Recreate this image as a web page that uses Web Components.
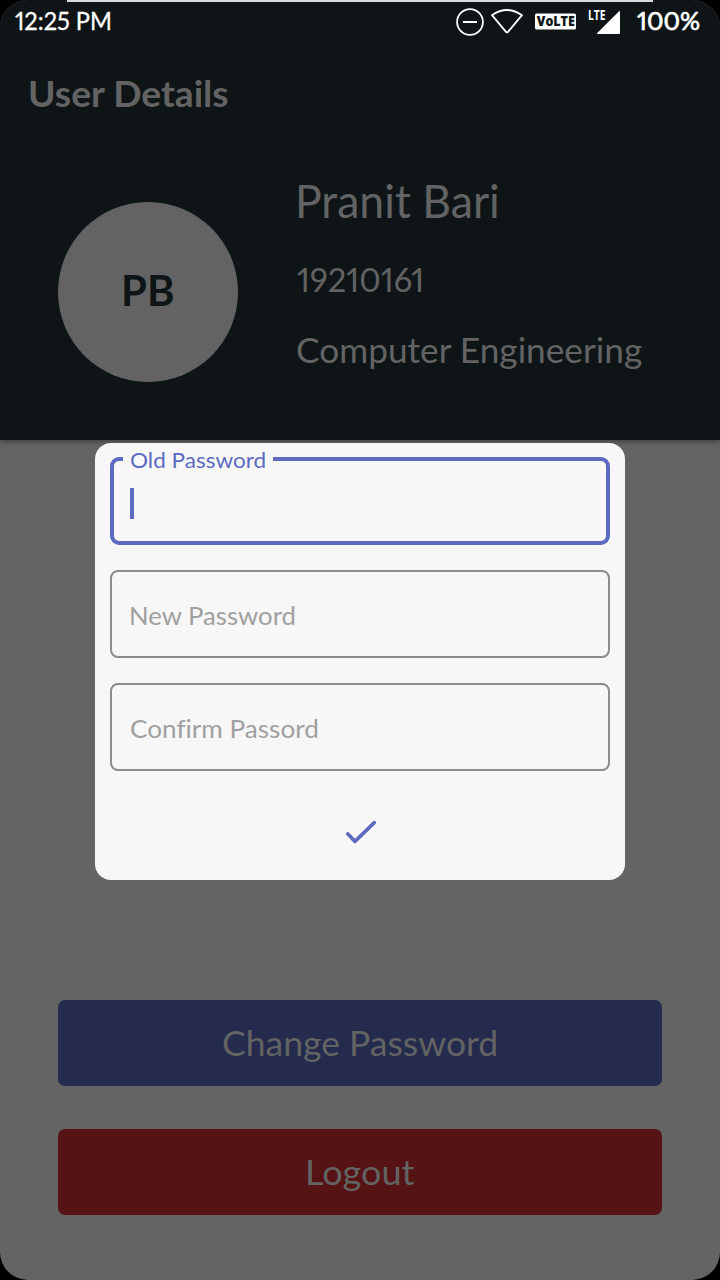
<!DOCTYPE html>
<html lang="en"><head><meta charset="utf-8"><title>User Details</title>
<style>html,body{margin:0;background:#000}body{font-family:Lato,"Open Sans",sans-serif}</style></head>
<body><user-screen></user-screen>
<script>
const define=(name,html,ready)=>customElements.define(name,class extends HTMLElement{
  connectedCallback(){ if(this.shadowRoot)return; this.attachShadow({mode:'open'}).innerHTML=html; if(ready)ready.call(this,this.shadowRoot); }
});

// One line of text widened so that its glyphs span exactly the "span" width.
define('fitted-text',`<style>:host{display:block;flex:none;white-space:nowrap}span{display:inline-block;font-variant-ligatures:none;font-variant-numeric:proportional-nums;transform-origin:0 50%}</style><span><slot></slot></span>`,function(r){
  const s=r.querySelector('span'),t=this.textContent,c=getComputedStyle(this),g=document.createElement('canvas').getContext('2d');
  const target=+this.getAttribute('span');
  g.font=c.fontWeight+' '+c.fontSize+' '+c.fontFamily;
  const m=g.measureText(t),left=-m.actualBoundingBoxLeft,right=m.width-m.actualBoundingBoxRight;
  const ink=s.getBoundingClientRect().width-left-right;
  const ratio=target/ink, k=Math.max(.93,ratio);
  s.style.letterSpacing=(target/k-ink)/(t.length-1)+'px';
  s.style.transform=`scaleX(${k})`;
  s.style.marginLeft=-left*k+'px';
  this.style.width=target+'px';
});

define('status-bar',`<style>
:host{display:block;height:41px;color:#fff;font-size:25px;line-height:41px}
.bar{display:flex;justify-content:space-between;padding:0 21px 0 17px;height:41px}
.right{display:flex}svg{display:block}.big{-webkit-text-stroke:.3px #fff}
text{font-family:"Open Sans",sans-serif;font-weight:800}
</style><div class="bar"><fitted-text span="93" class="big">12:25 PM</fitted-text>
<div class="right"><svg width="180" height="41" viewBox="455 0 180 41">
<circle cx="470" cy="22" r="12.9" fill="none" stroke="#fff" stroke-width="1.8"/><path d="M463 22H477" stroke="#fff" stroke-width="2"/>
<path d="M492 15.2Q507 4.8 522 15.2L508 31.8Q507 33 506 31.8Z" fill="none" stroke="#fff" stroke-width="1.8" stroke-linejoin="round"/>
<rect x="535" y="13.5" width="41" height="16" rx="1.5" fill="#fff"/><text x="536.8" y="26.2" font-size="13.6" fill="#0f1517" textLength="38" lengthAdjust="spacingAndGlyphs">VoLTE</text>
<text x="588" y="20" font-size="15" fill="#fff" style="font-weight:700" textLength="17.5" lengthAdjust="spacingAndGlyphs">LTE</text>
<path d="M596.5 34H619Q620 34 620 33V12Q620 10.3 618.8 11.5L597 33.2Q596.5 34 597.5 34Z" fill="#fff"/>
</svg><fitted-text span="60" style="-webkit-text-stroke:.7px #fff;margin-left:4px">100%</fitted-text></div></div>`);

define('app-bar',`<style>:host{display:flex;align-items:center;height:102px;padding-left:30px;font:700 35.5px/46px Lato,sans-serif}</style><slot></slot>`);

define('user-avatar',`<style>:host{display:flex;box-sizing:border-box;width:180px;height:180px;border-radius:50%;background:#636363;color:#0f1517;align-items:center;justify-content:center;padding-bottom:5px;margin-top:30px;font:700 42.5px/50px Lato,sans-serif}</style><slot></slot>`);

define('profile-header',`<style>
:host{display:flex;height:268px;padding:0 58px;gap:59px;align-items:flex-start}
.info{display:flex;flex-direction:column;padding-top:1px}
.name{font-size:45.5px;line-height:55px;margin-left:2px}.id{font-size:33px;line-height:40px;margin-top:31px;margin-left:2px}.dept{font-size:34px;line-height:42px;margin-top:30px}
</style><user-avatar><fitted-text span="49.5" style="margin-left:1px">PB</fitted-text></user-avatar>
<div class="info"><fitted-text class="name" span="199">Pranit Bari</fitted-text><fitted-text class="id" span="123">19210161</fitted-text><fitted-text class="dept" span="344.5">Computer Engineering</fitted-text></div>`);

define('action-button',`<style>:host{display:flex;height:86px;border-radius:7px;align-items:center;justify-content:center;font-size:34px;line-height:40px;box-sizing:border-box}</style><slot></slot>`);

define('outlined-field',`<style>
:host{display:flex;position:relative;box-sizing:border-box;height:88px;border:2px solid #8c8c8c;border-radius:8px;align-items:center;padding:3px 0 0 19.5px;color:#a0a0a0;font-size:24.5px;line-height:30px}
:host([active]){border:4px solid #5c6bc0;border-radius:9px;color:#5c6bc0;padding:0 0 0 16px}
.label{position:absolute;left:9px;top:-14px;width:150px;box-sizing:border-box;padding-left:8px;background:#f7f7f7;font-size:21.5px;line-height:26px}
.caret{width:4px;height:31px;background:#5c6bc0;margin-top:4px}
:host(:not([active])) .caret{display:none}:host(:not([active])) .label{display:none}
</style><div class="label"><slot name="label"></slot></div><i class="caret"></i><slot></slot>`);

define('password-dialog',`<style>
:host{display:flex;position:absolute;left:95px;top:443px;width:530px;height:437px;box-sizing:border-box;padding:14px 15px 0;border-radius:16px;background:#f7f7f7;flex-direction:column;gap:25px}
svg{align-self:center;margin-top:21px}
</style><outlined-field active><fitted-text slot="label" span="134">Old Password</fitted-text></outlined-field>
<outlined-field><fitted-text span="163">New Password</fitted-text></outlined-field>
<outlined-field><fitted-text span="186">Confirm Passord</fitted-text></outlined-field>
<svg width="36" height="30" viewBox="342 817 36 30" fill="none" stroke="#5c6bc0" stroke-width="3.6" stroke-linecap="round" stroke-linejoin="round"><path d="M347.7 833.8L355 841.4L374.3 822.6"/></svg>`);

define('user-screen',`<style>
:host{display:block;position:relative;width:720px;height:1280px;border-radius:28px;overflow:hidden;background:#646464;color:#636363}
.top{position:relative;height:440px;background:#0f1517;box-shadow:0 1px 6px rgba(0,0,0,.45)}
.edge{position:absolute;top:0;left:67px;width:586px;height:2px;background:#dadcdc}
app-bar{height:106px}profile-header{margin-top:25px}
.actions{display:flex;flex-direction:column;gap:43px;padding:560px 58px 0}
.change{background:#252b4d}.logout{background:#561314;padding-left:2px}
</style><div class="top"><status-bar></status-bar><app-bar><fitted-text span="198">User Details</fitted-text></app-bar><profile-header></profile-header><div class="edge"></div></div>
<div class="actions"><action-button class="change"><fitted-text span="273">Change Password</fitted-text></action-button><action-button class="logout"><fitted-text span="106">Logout</fitted-text></action-button></div>
<password-dialog></password-dialog>`);
</script></body></html>
